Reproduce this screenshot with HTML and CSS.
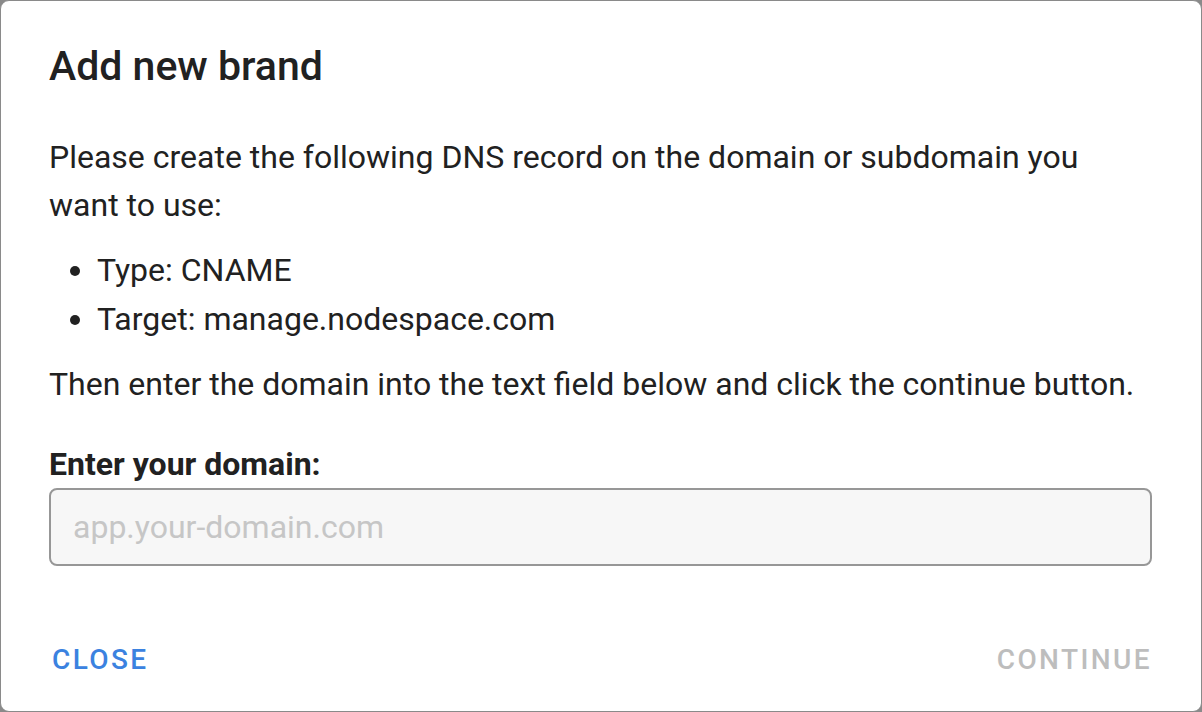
FILE: index.html
```html
<!DOCTYPE html>
<html lang="en">
<head>
<meta charset="utf-8">
<title>Add new brand</title>
<link rel="stylesheet" href="styles.css">
</head>
<body>
<div class="dialog">
  <h2 class="dialog-title">Add new brand</h2>
  <div class="dialog-content">
    <p class="text">Please create the following DNS record on the domain or subdomain you want to use:</p>
    <ul class="list">
      <li>Type: CNAME</li>
      <li>Target: manage.nodespace.com</li>
    </ul>
    <p class="text">Then enter the domain into the text field below and click the continue button.</p>
    <label class="label" for="domain">Enter your domain:</label>
    <input class="input" id="domain" type="text" placeholder="app.your-domain.com">
  </div>
  <div class="dialog-actions">
    <button class="btn btn-primary">Close</button>
    <button class="btn btn-disabled">Continue</button>
  </div>
</div>
</body>
</html>
```

FILE: styles.css
```css
html, body {
  margin: 0;
  padding: 0;
  height: 100%;
}
body {
  background: #8a8a8a;
  font-family: Roboto, "Liberation Sans", Arial, sans-serif;
  color: #212121;
}
.dialog {
  box-sizing: border-box;
  width: 1202px;
  height: 712px;
  background: #ffffff;
  border: 1px solid #8a8a8a;
  border-radius: 9px;
  display: flex;
  flex-direction: column;
  padding: 37px 49px 27px 48px;
}
.dialog-title {
  margin: 0 0 39px 0;
  font-size: 41px;
  line-height: 56px;
  font-weight: 500;
  color: #212121;
}
.dialog-content {
  display: flex;
  flex-direction: column;
}
.text {
  margin: 0;
  font-size: 32px;
  line-height: 48px;
}
.list {
  margin: 17px 0 16px 0;
  padding-left: 48px;
  font-size: 32px;
  line-height: 49px;
}
.label {
  margin: 32px 0 0 0;
  font-size: 32px;
  line-height: 48px;
  font-weight: 700;
}
.input {
  box-sizing: border-box;
  width: 100%;
  height: 78px;
  margin: 0;
  border: 2px solid #979797;
  border-radius: 8px;
  background: #f7f7f7;
  padding: 0 22px;
  font-family: inherit;
  font-size: 32px;
  color: #212121;
  outline: none;
}
.input::placeholder {
  color: #c6c6c6;
}
.dialog-actions {
  margin-top: auto;
  display: flex;
  justify-content: space-between;
  padding: 0 0 0 3px;
}
.btn {
  background: none;
  border: 0;
  padding: 0;
  margin: 0;
  font-family: inherit;
  font-size: 28px;
  line-height: 48px;
  font-weight: 500;
  letter-spacing: 2.4px;
  text-transform: uppercase;
}
.btn-primary {
  color: #3b82e0;
}
.btn-disabled {
  color: #bdbdbd;
}
```
